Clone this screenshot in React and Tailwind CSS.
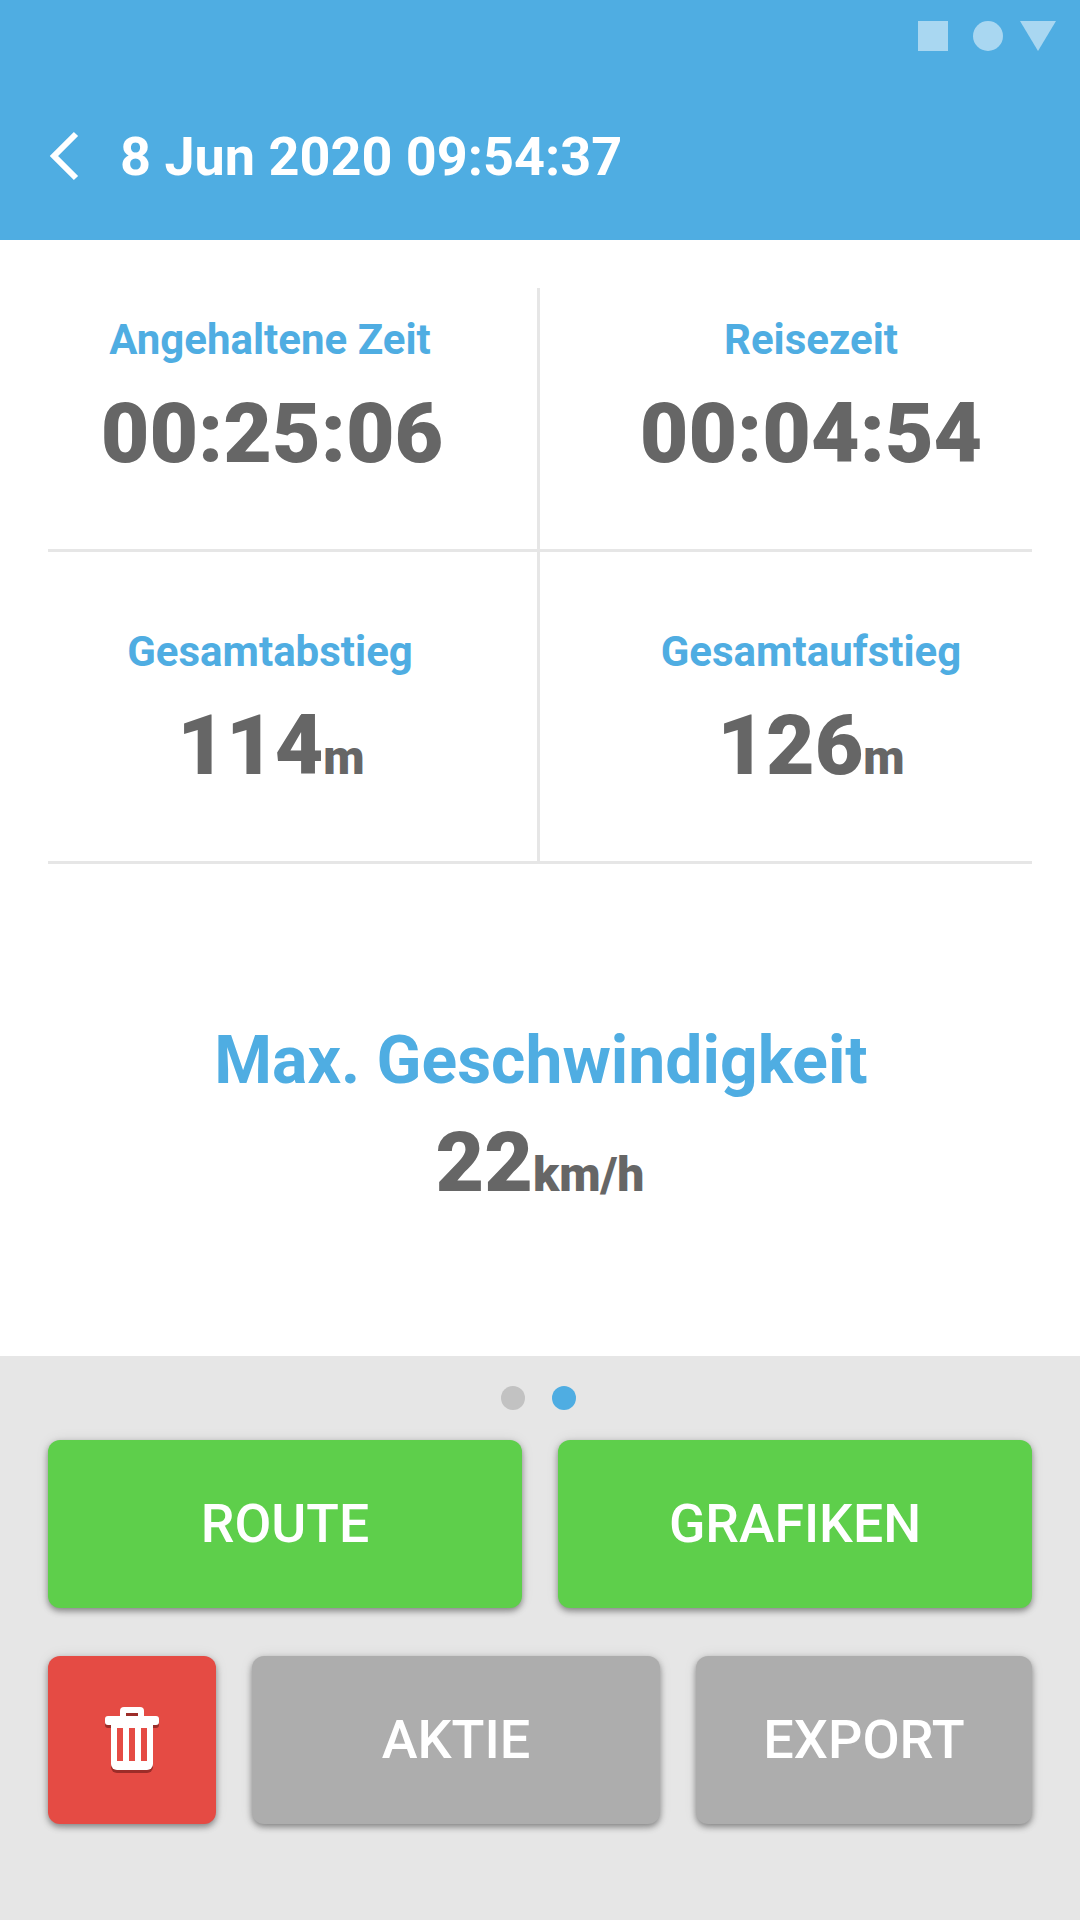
import React from "react";

const font = { fontFamily: "Roboto, sans-serif" };

function Cell({ label, value, unit, top, left, nudge }) {
  return (
    <div
      className={`h-full flex flex-col items-center border-b-[3px] border-[#e6e6e6] ${top} ${
        left ? "pr-[45px] border-r-[3px]" : "pl-[50px]"
      }`}
    >
      <div className="h-[52px] text-[#4fade2] font-bold text-[42px] leading-[52px]">{label}</div>
      <div className={`mt-[20px] text-[#666666] font-black text-[84px] leading-[96px] ${nudge || ""}`}>
        {value}
        {unit && <span className="text-[48px] font-black">{unit}</span>}
      </div>
    </div>
  );
}

function Trash() {
  return (
    <svg width="54" height="66" viewBox="0 0 54 66">
      <path d="M6 21h42v39a6 6 0 0 1-6 6H12a6 6 0 0 1-6-6z" fill="#9c2d29" />
      <rect x="0" y="12" width="54" height="9" rx="3" fill="#9c2d29" />
      <path d="M15 12V4a4 4 0 0 1 4-4h16a4 4 0 0 1 4 4v8z" fill="#fff" />
      <rect x="21" y="6" width="12" height="3" fill="#9c2d29" />
      <rect x="0" y="9" width="54" height="9" rx="3" fill="#fff" />
      <path d="M6 18h42v39a6 6 0 0 1-6 6H12a6 6 0 0 1-6-6z" fill="#fff" />
      <rect x="12" y="21" width="6" height="33" fill="#e54b44" />
      <rect x="24" y="21" width="6" height="33" fill="#e54b44" />
      <rect x="36" y="21" width="6" height="33" fill="#e54b44" />
    </svg>
  );
}

function Btn({ className, children }) {
  return (
    <div
      className={`h-[168px] rounded-[12px] flex items-center justify-center text-white shadow-[0_3px_6px_rgba(0,0,0,0.4),0_0_14px_rgba(0,0,0,0.08)] ${className}`}
    >
      {children}
    </div>
  );
}

export default function App() {
  return (
    <div style={font} className="w-[1080px] h-[1920px] flex flex-col bg-white overflow-hidden">
      <header className="h-[240px] bg-[#4fade2] flex flex-col">
        <div className="flex items-center justify-end gap-[25px] pt-[21px] pr-[24px] h-[51px]">
          <div className="w-[30px] h-[30px] bg-[#a9d7f1]" />
          <div className="w-[30px] h-[30px] rounded-full bg-[#a9d7f1]" />
          <svg width="36" height="30" viewBox="0 0 36 30" className="-ml-[8px]">
            <polygon points="0,0 36,0 18,30" fill="#a9d7f1" />
          </svg>
        </div>
        <div className="flex items-center mt-[73px] pl-[49px]">
          <svg width="30" height="50" viewBox="0 0 30 50">
            <path d="M27 3 L5 25 L27 47" fill="none" stroke="#fff" strokeWidth="6" />
          </svg>
          <div className="ml-[41px] mt-[3px] text-white font-bold text-[54px] leading-[60px]">8 Jun 2020 09:54:37</div>
        </div>
      </header>

      <main className="flex-1 flex flex-col pt-[48px]">
        <div className="mx-[48px] grid grid-cols-[492px_492px] grid-rows-[264px_312px]">
          <Cell label="Angehaltene Zeit" value="00:25:06" top="pt-[26px]" left nudge="ml-[4px]" />
          <Cell label="Reisezeit" value="00:04:54" top="pt-[26px]" />
          <Cell label="Gesamtabstieg" value="114" unit="m" top="pt-[74px]" left nudge="ml-[2px]" />
          <Cell label="Gesamtaufstieg" value="126" unit="m" top="pt-[74px]" />
        </div>
        <div className="flex-1 flex flex-col items-center justify-center pt-[26px] pl-[2px]">
          <div className="text-[#4fade2] font-bold text-[66px] leading-[76px]">Max. Geschwindigkeit</div>
          <div className="text-[#666666] font-black text-[84px] leading-[96px] mt-[16px] -ml-[2px]">
            22<span className="text-[48px] font-black">km/h</span>
          </div>
        </div>
      </main>

      <footer className="h-[564px] bg-[#e6e6e6] px-[48px]">
        <div className="flex justify-center gap-[27px] pt-[30px] h-[84px] pr-[4px]">
          <div className="w-[24px] h-[24px] rounded-full bg-[#c2c2c2]" />
          <div className="w-[24px] h-[24px] rounded-full bg-[#4fade2]" />
        </div>
        <div className="flex justify-between">
          <Btn className="w-[474px] bg-[#5ecf4b] font-medium text-[53.5px] pt-[1px]">ROUTE</Btn>
          <Btn className="w-[474px] bg-[#5ecf4b] font-medium text-[53.5px] pt-[1px]">GRAFIKEN</Btn>
        </div>
        <div className="flex justify-between mt-[48px]">
          <Btn className="w-[168px] bg-[#e54b44]">
            <Trash />
          </Btn>
          <Btn className="w-[408px] bg-[#adadad] font-medium text-[54px] pb-[2px]">AKTIE</Btn>
          <Btn className="w-[336px] bg-[#adadad] font-medium text-[54px] pb-[2px]">EXPORT</Btn>
        </div>
      </footer>
    </div>
  );
}
